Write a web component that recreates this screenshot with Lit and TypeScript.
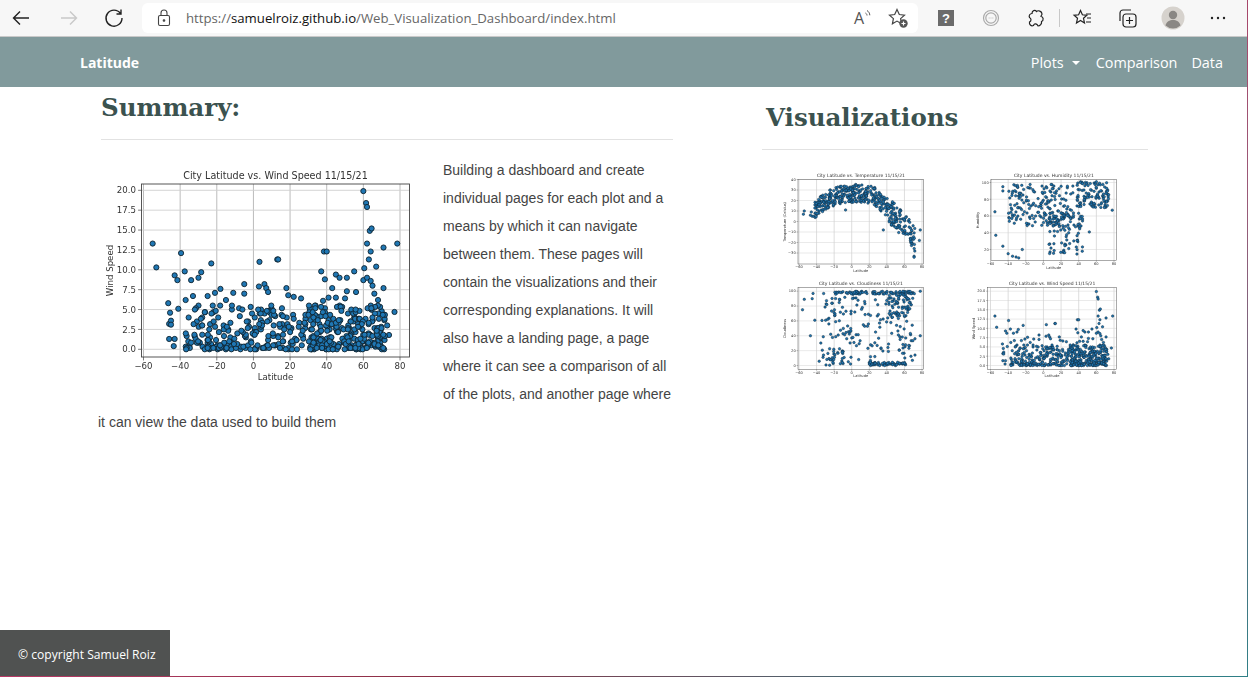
import {css, html, svg, LitElement} from "lit";
import {customElement, property} from "lit/decorators.js";

type Pt = [number, number];

interface PlotSpec {
  title: string;
  yLabel: string;
  w: number;
  h: number;
  // plot frame inside the svg
  left: number;
  right: number;
  top: number;
  bottom: number;
  // data to pixel anchors: [value, pixel]
  x0: Pt;
  x1: Pt;
  y0: Pt;
  y1: Pt;
  yTicks: number[];
  fixed?: number;
  points: Pt[];
  r: number;
  sw: number;
  tickSize: number;
  titleSize: number;
  tickGap: number;
  xLabelGap: number;
  yLabelGap: number;
}

function rng(seed: number) {
  let a = seed;
  return () => {
    a = (a + 0x6d2b79f5) | 0;
    let t = Math.imul(a ^ (a >>> 15), 1 | a);
    t = (t + Math.imul(t ^ (t >>> 7), 61 | t)) ^ t;
    return ((t ^ (t >>> 14)) >>> 0) / 4294967296;
  };
}

// the sparse points of the wind chart, read from the screenshot
const windOutliers: Pt[] = [
  [-55, 13.3], [-53, 10.3], [-39.5, 12.1], [-43, 9.3], [-41.5, 8.7], [-37.5, 9.8], [-34, 8.7], [-30, 9],
  [-28.5, 9.7], [-23, 10.8], [3.3, 11], [13, 11.3], [13.5, 11.3], [37, 9.8], [38.5, 12.3], [40, 12.3],
  [39, 8.8], [45, 9.4], [47, 9], [51, 9], [55, 9.8], [60, 19.9], [61.5, 18.4], [62, 17.9], [63.5, 14.9],
  [64.5, 15.2], [62, 13.3], [64, 12.3], [71, 12.8], [78.5, 13.3], [63, 11.3], [60.5, 10.2], [67, 10.4],
  [60, 8.7], [62, 9], [64, 8.6], [65, 8], [71, 7.7], [77, 4.7], [-46.5, 5.8], [-45.5, 4.6], [-41, 5.1],
  [-46, 3.2], [-45, 3.6], [-45, 3.1], [-46, 1.3], [-43, 1.3], [-43.5, 0.4], [-35, 0.4], [-25, 0.8],
  [-24, 0], [-18, 7.6], [-21, 7.1], [-25, 6.7], [-33, 6.7], [-37, 6.2], [-15, 6.2], [-11, 7.1], [-5, 7],
  [-5, 8.2], [3, 7.9], [6, 8.2], [7, 7.7], [8, 7.2], [18, 7.7], [19, 6.8], [22, 6.6], [26, 6.4], [38, 6.1],
  [41, 6.5], [45, 6.5], [51, 7.3], [56, 7.2], [43, 7.7], [50, 6.4], [66, 7], [68, 6.2], [70, 4.8], [73, 3], [74, 1.8]
];

function windData(): Pt[] {
  const r = rng(11);
  const pts = [...windOutliers];
  for (let i = 0; i < 470; i++) {
    // more cities in the northern band, as in the picture
    const lat = r() < 0.25 ? 30 + r() * 42 : -37 + r() * 109;
    const w = 5.6 * Math.pow(r(), 1.5);
    pts.push([lat, Math.round(w * 6) / 6]);
  }
  return pts;
}

const tempCurve: Pt[] = [[-45, 9], [-30, 20], [-15, 25], [5, 27], [25, 25], [40, 13], [55, 0], [65, -9], [75, -20]];

function tempAt(lat: number) {
  for (let i = 1; i < tempCurve.length; i++) {
    const [a, b] = [tempCurve[i - 1], tempCurve[i]];
    if (lat <= b[0]) return a[1] + ((lat - a[0]) / (b[0] - a[0])) * (b[1] - a[1]);
  }
  return tempCurve[tempCurve.length - 1][1];
}

function tempData(): Pt[] {
  const r = rng(5);
  const pts: Pt[] = [[-55, 7], [-54, 10], [-47, 6], [-46, 9], [-45, 5], [-43, 5], [71, -33], [71, -34], [78, -8], [77, -18], [36, -8], [-7, 11]];
  for (let i = 0; i < 440; i++) {
    const lat = -42 + r() * 114;
    pts.push([lat, tempAt(lat) + (r() - 0.5) * (lat > 40 ? 24 : 17)]);
  }
  return pts;
}

function humidityData(): Pt[] {
  const r = rng(23);
  const pts: Pt[] = [[-55, 65], [-54, 37], [-46, 24], [-40, 15], [-35, 12], [-31, 11], [-28, 10], [-24, 20], [-46, 95], [-46, 90], [78, 67], [52, 41], [44, 18]];
  for (let i = 0; i < 190; i++) pts.push([-40 + r() * 75, 48 + r() * 50]);
  for (let i = 0; i < 110; i++) pts.push([38 + r() * 36, 70 + r() * 31]);
  for (let i = 0; i < 90; i++) pts.push([5 + r() * 40, 14 + r() * 50]);
  return pts;
}

function cloudData(): Pt[] {
  const r = rng(41);
  const pts: Pt[] = [[-56, 75], [-54, 89], [-47, 40], [-45, 90], [-44, 97], [-42, 61], [72, 14], [78, 100], [78, 40], [72, 36]];
  for (let i = 0; i < 90; i++) pts.push([-20 + r() * 92, 96 + r() * 4]);
  for (let i = 0; i < 60; i++) pts.push([20 + r() * 42, Math.round(r() * 4)]);
  for (let i = 0; i < 25; i++) pts.push([-37 + r() * 28, r() * 25]);
  for (let i = 0; i < 60; i++) pts.push([38 + r() * 30, 65 + r() * 30]);
  for (let i = 0; i < 170; i++) pts.push([-38 + r() * 108, r() * 100]);
  return pts;
}

const wind = windData();
const xTicks = [-60, -40, -20, 0, 20, 40, 60, 80];

@customElement("scatter-plot")
export class ScatterPlot extends LitElement {
  @property({attribute: false}) spec!: PlotSpec;
  @property({type: Boolean, reflect: true}) small = false;

  static styles = css`
    :host {
      display: block;
    }
    svg {
      display: block;
      filter: blur(0.3px);
    }
    :host([small]) svg {
      filter: blur(0.45px);
    }
    text {
      font-family: "DejaVu Sans", sans-serif;
      fill: #333;
    }
  `;

  render() {
    const s = this.spec;
    const px = (v: number) => s.x0[1] + ((v - s.x0[0]) / (s.x1[0] - s.x0[0])) * (s.x1[1] - s.x0[1]);
    const py = (v: number) => s.y0[1] + ((v - s.y0[0]) / (s.y1[0] - s.y0[0])) * (s.y1[1] - s.y0[1]);
    const tick = s.tickSize * 0.4;
    return html`
      <svg width=${s.w} height=${s.h} viewBox="0 0 ${s.w} ${s.h}">
        ${xTicks.map(t => svg`
          <line x1=${px(t)} x2=${px(t)} y1=${s.top} y2=${s.bottom} stroke="#b4b4b4" stroke-width=${s.sw}></line>
          <line x1=${px(t)} x2=${px(t)} y1=${s.bottom} y2=${s.bottom + tick} stroke="#333" stroke-width=${s.sw * 0.7}></line>
          <text x=${px(t)} y=${s.bottom + s.tickGap} font-size=${s.tickSize} text-anchor="middle">${t < 0 ? "\u2212" + -t : t}</text>
        `)}
        ${s.yTicks.map(t => svg`
          <line x1=${s.left} x2=${s.right} y1=${py(t)} y2=${py(t)} stroke="#d0d0d0" stroke-width=${s.sw}></line>
          <line x1=${s.left - tick} x2=${s.left} y1=${py(t)} y2=${py(t)} stroke="#333" stroke-width=${s.sw * 0.7}></line>
          <text x=${s.left - tick * 1.6} y=${py(t) + s.tickSize * 0.36} font-size=${s.tickSize} text-anchor="end">${(t < 0 ? "\u2212" : "") + Math.abs(t).toFixed(s.fixed ?? 0)}</text>
        `)}
        ${s.points.map(p => svg`
          <circle cx=${px(p[0])} cy=${py(p[1])} r=${s.r} fill="#1f77b4" stroke="#10222e" stroke-width=${s.sw}></circle>
        `)}
        <rect x=${s.left} y=${s.top} width=${s.right - s.left} height=${s.bottom - s.top} fill="none" stroke="#444" stroke-width=${s.sw}></rect>
        <text x=${(s.left + s.right) / 2} y=${s.top - s.titleSize * 0.5} font-size=${s.titleSize} text-anchor="middle">${s.title}</text>
        <text x=${(s.left + s.right) / 2} y=${s.bottom + s.xLabelGap} font-size=${s.tickSize} text-anchor="middle">Latitude</text>
        <text transform="translate(${s.left - s.yLabelGap} ${(s.top + s.bottom) / 2}) rotate(-90)" font-size=${s.tickSize} text-anchor="middle">${s.yLabel}</text>
      </svg>
    `;
  }
}

const mainPlot: PlotSpec = {
  title: "City Latitude vs. Wind Speed 11/15/21", yLabel: "Wind Speed",
  w: 345, h: 234, left: 43.5, right: 311.5, top: 28, bottom: 201,
  x0: [-60, 45.5], x1: [80, 302], y0: [0, 193.3], y1: [20, 34.3],
  yTicks: [0, 2.5, 5, 7.5, 10, 12.5, 15, 17.5, 20], fixed: 1,
  points: wind, r: 2.6, sw: 0.9, tickSize: 8.6, titleSize: 9.6,
  tickGap: 11.6, xLabelGap: 22.8, yLabelGap: 29
};

const small = {
  w: 193, h: 109, left: 36, right: 161.5, r: 1.25, sw: 0.45, tickSize: 3.6, titleSize: 4.5,
  tickGap: 4.4, xLabelGap: 8, yLabelGap: 12.2
};

const plots: PlotSpec[] = [
  {
    ...small, title: "City Latitude vs. Temperature 11/15/21", yLabel: "Temperature (Celsius)",
    top: 9.5, bottom: 94,
    x0: [-60, 37], x1: [80, 160], y0: [0, 51.5], y1: [40, 9.5],
    yTicks: [-30, -20, -10, 0, 10, 20, 30, 40], points: tempData()
  },
  {
    ...small, title: "City Latitude vs. Humidity 11/15/21", yLabel: "Humidity",
    top: 9.5, bottom: 90.5,
    x0: [-60, 35.5], x1: [80, 159], y0: [20, 79.5], y1: [100, 12.5],
    yTicks: [20, 40, 60, 80, 100], points: humidityData()
  },
  {
    ...small, title: "City Latitude vs. Cloudiness 11/15/21", yLabel: "Cloudiness",
    top: 8.7, bottom: 90.3,
    x0: [-60, 37], x1: [80, 160], y0: [0, 86.5], y1: [100, 12.2],
    yTicks: [0, 20, 40, 60, 80, 100], points: cloudData()
  },
  {
    ...small, title: "City Latitude vs. Wind Speed 11/15/21", yLabel: "Wind Speed",
    left: 32.5, top: 8.7, bottom: 90.3,
    x0: [-60, 35.5], x1: [80, 159], y0: [0, 86.5], y1: [20, 12.2],
    yTicks: [0, 2.5, 5, 7.5, 10, 12.5, 15, 17.5, 20], fixed: 1, points: wind
  }
];

@customElement("app-root")
export class AppRoot extends LitElement {
  static styles = css`
    :host {
      display: flex;
      flex-direction: column;
      box-sizing: border-box;
      min-height: 677px;
      background: #fff;
      color: #444;
      font-family: "Liberation Sans", Arial, sans-serif;
      border-right: 1px solid;
      border-image: linear-gradient(#a8466a, #9a5a78 30%, #2f7f86) 1;
    }

    .browser {
      display: flex;
      align-items: center;
      height: 36px;
      flex: none;
      background: #f7f7f7;
      border-bottom: 1px solid #c9c9c9;
      gap: 21px;
      padding-left: 9px;
    }
    .tool {
      width: 24px;
      height: 24px;
      flex: none;
    }
    .tool svg {
      display: block;
    }
    .forward {
      margin-left: 3px;
    }
    .address {
      display: flex;
      align-items: center;
      width: 776px;
      height: 30px;
      margin: 0 -5px;
      flex: none;
      background: #fff;
      border-radius: 6px;
      font-family: "Open Sans", sans-serif;
      font-size: 13.2px;
      color: #666;
    }
    .lock {
      width: 16px;
      height: 18px;
      margin: 0 14px;
    }
    .host-name {
      color: #111;
    }
    .address-icons {
      display: flex;
      gap: 12px;
      margin-left: auto;
      margin-right: 8px;
    }
    .divider {
      width: 1px;
      height: 18px;
      margin: 0 -10px;
      background: #c8c8c8;
      flex: none;
    }

    .navbar {
      display: flex;
      align-items: center;
      height: 50px;
      flex: none;
      padding: 0 24px 0 80px;
      background: #819a9c;
      color: #fff;
      font-family: "Open Sans", sans-serif;
      font-size: 14.4px;
    }
    .brand {
      font-weight: 700;
      font-size: 14px;
    }
    .links {
      display: flex;
      align-items: center;
      gap: 14px;
      margin-left: auto;
    }
    .plots {
      margin-right: 2px;
    }
    .caret {
      display: inline-block;
      margin-left: 8px;
      vertical-align: 3px;
      border-top: 4px solid #fff;
      border-left: 4.5px solid transparent;
      border-right: 4.5px solid transparent;
    }

    .content {
      display: flex;
      flex: 1;
      padding-left: 98px;
    }
    .summary {
      width: 575px;
      flex: none;
    }
    .visuals {
      width: 386px;
      margin-left: 89px;
      flex: none;
    }
    h1 {
      margin: 0;
      font-family: "DejaVu Serif", Georgia, serif;
      font-weight: 700;
      font-size: 24.5px;
      line-height: 40px;
      color: #3b524f;
    }
    .summary h1 {
      padding: 1px 0 0 3px;
      margin-bottom: 11px;
    }
    .visuals h1 {
      padding: 11px 0 0 4px;
      margin-bottom: 11px;
    }
    hr {
      margin: 0;
      border: 0;
      border-top: 1px solid #e2e2e2;
    }
    .summary hr {
      margin-left: 3px;
    }
    .body-text {
      margin: 16px 0 0;
      font-size: 14px;
      line-height: 28px;
    }
    .main-plot {
      float: left;
    }
    .grid {
      display: grid;
      grid-template-columns: 193px 193px;
      grid-auto-rows: 109px;
      margin-top: 20px;
    }

    .footer {
      display: flex;
      align-items: center;
      width: 170px;
      height: 46px;
      flex: none;
      box-sizing: border-box;
      padding: 2px 0 0 18px;
      background: #505251;
      color: #fff;
      font-family: "Open Sans", sans-serif;
      font-size: 12.1px;
    }
    .edge {
      height: 1px;
      flex: none;
      background: linear-gradient(90deg, #b83a66, #8a2f45 35%, #5a5a66 60%, #2f7f86 85%);
    }
  `;

  renderIcon(body: unknown, extra = "") {
    return html`<div class="tool ${extra}"><svg width="24" height="24" viewBox="0 0 24 24" fill="none" stroke="#222" stroke-width="1.2">${body}</svg></div>`;
  }

  renderBrowser() {
    return html`
      <div class="browser">
        ${this.renderIcon(svg`<path d="M20 12H5M11 5.5L4.5 12l6.5 6.5" stroke-width="1.4"></path>`)}
        ${this.renderIcon(svg`<path d="M4 12h15M13 5.5l6.5 6.5-6.5 6.5" stroke="#c9c9c9" stroke-width="1.4"></path>`, "forward")}
        ${this.renderIcon(svg`<path d="M18.5 7.5A8 8 0 1 0 20 12M19 3.5V8h-4.5" stroke-width="1.4"></path>`)}
        <div class="address">
          <svg class="lock" viewBox="0 0 16 18" fill="none" stroke="#444" stroke-width="1.1">
            <rect x="2.5" y="6.5" width="11" height="10" rx="1.5"></rect>
            <path d="M5 6.5V4a3 3 0 0 1 6 0v2.5"></path>
            <circle cx="8" cy="11.5" r="0.8" fill="#444"></circle>
          </svg>
          <span>https://<span class="host-name">samuelroiz.github.io</span>/Web_Visualization_Dashboard/index.html</span>
          <div class="address-icons">
            ${this.renderIcon(svg`
              <text x="4" y="18" font-family="Open Sans, sans-serif" font-size="16" fill="#555" stroke="none">A</text>
              <path d="M15.5 7c1 .7 1.5 1.5 1.5 2.5M17 4.5c1.800 1.200 2.800 2.800 2.800 4.800" stroke="#555" stroke-width="1"></path>`)}
            ${this.renderIcon(svg`
              <path d="M11 3.5l2.3 5 5.2.6-3.900 3.500 1 5.200-4.600-2.700-4.600 2.700 1-5.200L3.500 9.100l5.200-.6z" stroke="#444"></path>
              <circle cx="17.5" cy="17.5" r="4.2" fill="#555" stroke="none"></circle>
              <path d="M15.5 17.5h4M17.5 15.5v4" stroke="#fff"></path>`)}
          </div>
        </div>
        ${this.renderIcon(svg`
          <rect x="4" y="4" width="16" height="16" fill="#6b6b6b" stroke="none"></rect>
          <text x="12" y="17" font-family="Liberation Sans, sans-serif" font-weight="700" font-size="13" fill="#fff" stroke="none" text-anchor="middle">?</text>`)}
        ${this.renderIcon(svg`
          <circle cx="12" cy="12" r="7.5" stroke="#aaa"></circle>
          <circle cx="12" cy="12" r="5.2" stroke="#aaa"></circle>
          <path d="M9.8 12h.6M11.7 12h.6M13.6 12h.6" stroke="#999"></path>`)}
        ${this.renderIcon(svg`
          <path d="M8 7.5C8 4.5 11 3.5 12.5 5.5 14 4 18 5 18 8c0 1-1 1.5-1 2.5 2.5 0 3 4 .5 5C18 18 16 20 14 20l-1-1.5c-1-1-3-1-3.5 1-2.500 1-4.500-1-4-3.500 2-1 2-3.500 0-4.500-1-2 .5-4 2.500-4z"></path>`)}
        <div class="divider"></div>
        ${this.renderIcon(svg`
          <path d="M9.5 4.5l1.900 4.300 4.500.5-3.400 3 1 4.600-4-2.400-4 2.400 1-4.600-3.400-3 4.500-.5z"></path>
          <path d="M15 8h5M16 12h4M15 16h5"></path>`)}
        ${this.renderIcon(svg`
          <rect x="7" y="8" width="13" height="13" rx="3"></rect>
          <path d="M4 15V7a3 3 0 0 1 3-3h8M13.5 11v7M10 14.5h7"></path>`)}
        ${this.renderIcon(svg`
          <circle cx="12" cy="12" r="11.5" fill="#d6d2cd" stroke="none"></circle>
          <circle cx="12" cy="9" r="4.2" fill="#8a8784" stroke="none"></circle>
          <path d="M4.5 19.5c1-4 4-5.500 7.500-5.500s6.500 1.500 7.500 5.500a11 11 0 0 1-15 0z" fill="#8a8784" stroke="none"></path>`)}
        ${this.renderIcon(svg`
          <circle cx="6" cy="12" r="1.2" fill="#222" stroke="none"></circle>
          <circle cx="12" cy="12" r="1.2" fill="#222" stroke="none"></circle>
          <circle cx="18" cy="12" r="1.2" fill="#222" stroke="none"></circle>`)}
      </div>
    `;
  }

  render() {
    return html`
      ${this.renderBrowser()}
      <nav class="navbar">
        <span class="brand">Latitude</span>
        <div class="links">
          <span class="plots">Plots<i class="caret"></i></span>
          <span>Comparison</span>
          <span>Data</span>
        </div>
      </nav>
      <main class="content">
        <section class="summary">
          <h1>Summary:</h1>
          <hr />
          <p class="body-text">
            <scatter-plot class="main-plot" .spec=${mainPlot}></scatter-plot>
            Building a dashboard and create individual pages for each plot and a means by which it can navigate
            between them. These pages will contain the visualizations and their corresponding explanations. It will
            also have a landing page, a page where it can see a comparison of all of the plots, and another page where
            it can view the data used to build them
          </p>
        </section>
        <section class="visuals">
          <h1>Visualizations</h1>
          <hr />
          <div class="grid">
            ${plots.map(p => html`<scatter-plot small .spec=${p}></scatter-plot>`)}
          </div>
        </section>
      </main>
      <footer class="footer">© copyright Samuel Roiz</footer>
      <div class="edge"></div>
    `;
  }
}
